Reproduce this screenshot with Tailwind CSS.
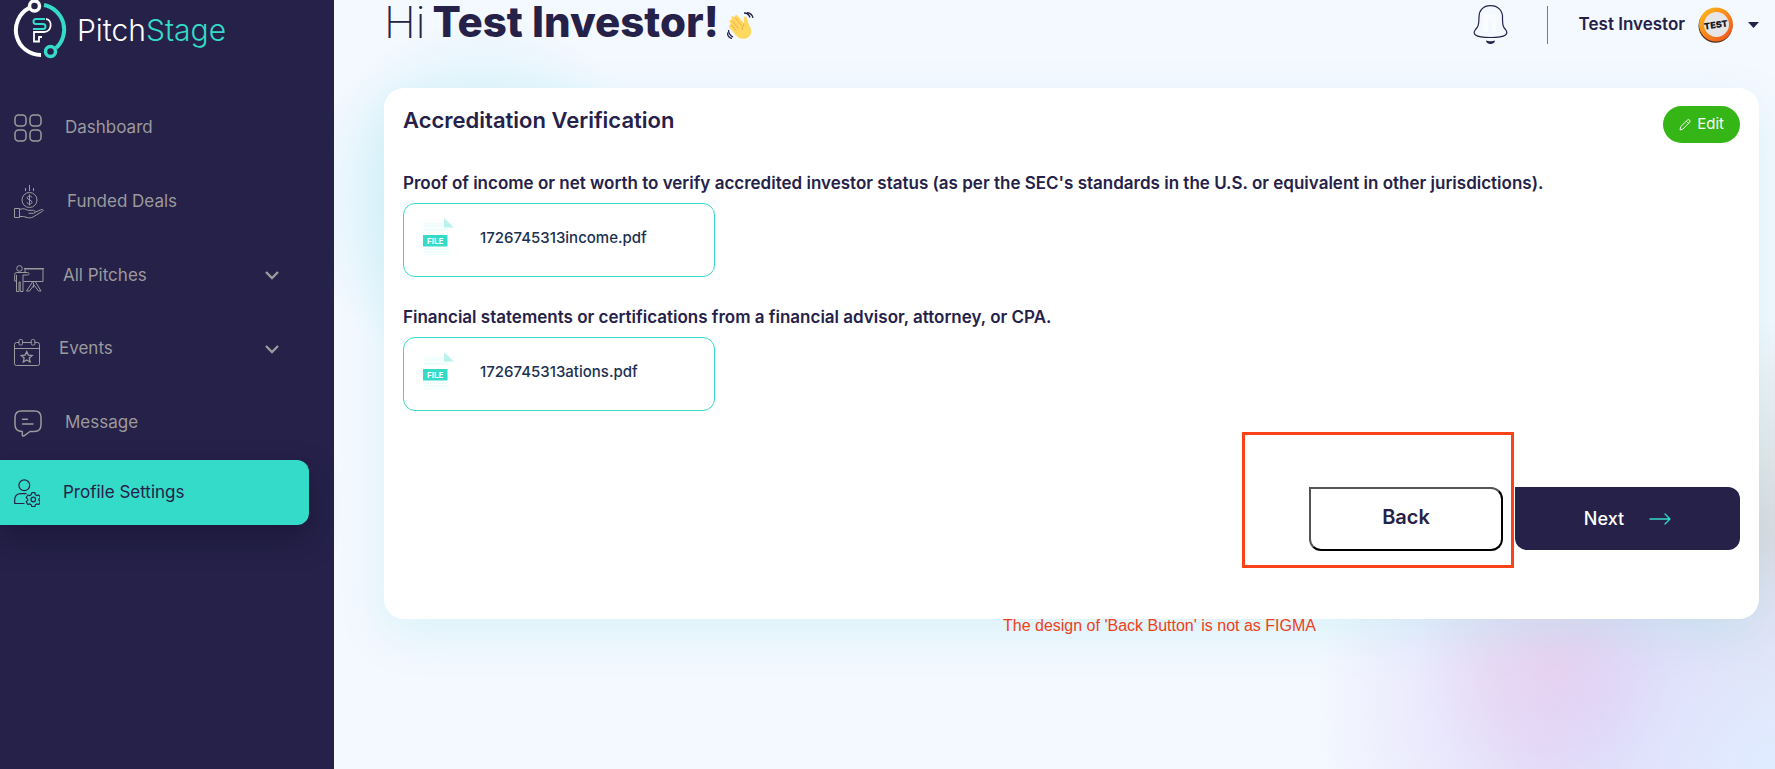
<!DOCTYPE html>
<html lang="en">
<head>
    <meta charset="UTF-8">
    <meta name="viewport" content="width=device-width, initial-scale=1.0">
    <title>PitchStage - Profile Settings</title>
    <script src="https://cdn.jsdelivr.net/npm/@tailwindcss/browser@4"></script>
</head>
<body class="flex min-h-screen overflow-hidden bg-[#f4f8ff] font-['Inter',sans-serif] text-[#252149]">
    <!-- Sidebar -->
    <aside class="w-[334px] shrink-0 bg-[#252149] text-[#9c9a9c]">
        <a href="#" class="flex h-[91px] items-start gap-[9px] pl-[13px] text-[30px] leading-[60px] font-light text-white">
            <svg class="h-[60px] w-[55px]" viewBox="13 0 55 60" fill="none" stroke-width="4">
                <path d="M29 8A25 25 0 0 0 41 55" stroke="#fff"/>
                <path d="M44 5A25 25 0 0 1 56 48" stroke="#34dbc8"/>
                <circle cx="34.500" cy="6" r="5" stroke="#fff" stroke-width="3.500"/>
                <circle cx="50.500" cy="51.500" r="5" stroke="#34dbc8" stroke-width="3.500"/>
                <path d="M45 19H36a2.500 2.500 0 0 0 0 5h7a2.500 2.500 0 0 1 0 5H33" stroke="#34dbc8" stroke-width="2"/>
                <path d="M46 19c7 1 6 13-2 13H34v9.500h5V37h3" stroke="#fff" stroke-width="1.800"/>
            </svg>
            <span>Pitch<span class="text-[#34dbc8]">Stage</span></span>
        </a>
        <nav class="text-[17px]">
            <a href="#" class="flex h-[74px] items-center gap-[23px] pl-[14px]">
                <svg class="size-7" viewBox="0 0 28 28" fill="none" stroke="currentColor" stroke-width="1.500">
                    <rect x="1" y="1" width="11" height="11" rx="3.500"/><rect x="16" y="1" width="11" height="11" rx="3.500"/>
                    <rect x="1" y="16" width="11" height="11" rx="3.500"/><rect x="16" y="16" width="11" height="11" rx="3.500"/>
                </svg>
                Dashboard
            </a>
            <a href="#" class="flex h-[74px] items-center gap-[23px] pl-[14px]">
                <svg class="h-[34px] w-[30px]" viewBox="0 0 30 34" fill="none" stroke="currentColor" stroke-width="1">
                    <path d="M15.500 0v6M11.500 3v3M19.500 3v3"/>
                    <circle cx="15.500" cy="15" r="7.500"/>
                    <path d="M18 12.500c-.5-2-4.500-2-4.800.2-.3 2.300 4.800 2 4.800 4.500 0 2.300-4.500 2.500-5 .2M15.500 9.500v11"/>
                    <path d="M.5 23.500h5v9h-5zM5.500 24.500c4-1.500 6-.5 8 .8h6c2 0 2 3 0 3h-5M20.500 27.500l7-3c2-.5 2 1 1 1.700L19 32c-2 1-4 1-6 .5l-3.500-1h-4"/>
                </svg>
                Funded Deals
            </a>
            <a href="#" class="flex h-[73px] items-center gap-[19px] pr-[55px] pl-[14px]">
                <svg class="mt-[6px] h-[28px] w-[30px]" viewBox="0 0 30 28" fill="none" stroke="currentColor" stroke-width="1">
                    <circle cx="5.500" cy="3.500" r="2.800"/>
                    <path d="M.7 16V9.500Q.7 7.500 3 7.500h10.500c2 0 2 2.500 0 2.500H9v16.500H6.200V17H5v9.500H2.500V10M.7 16h1.800M11 7.500V4h18v12.500H9.500M10 3.500h20"/>
                    <path d="M18.500 17l-6 9h3l4.500-6 4.500 6H27l-5.500-9M19.500 17.500v5"/>
                </svg>
                All Pitches
                <svg class="ml-auto h-[9px] w-[14px]" viewBox="0 0 14 9" fill="none" stroke="currentColor" stroke-width="2.400"><path d="M1 1l6 6 6-6"/></svg>
            </a>
            <a href="#" class="flex h-[74px] items-center gap-[19px] pr-[55px] pl-[14px]">
                <svg class="mt-[6px] h-[27px] w-[26px]" viewBox="0 0 26 27" fill="none" stroke="currentColor" stroke-width="1">
                    <path d="M5 3.500H2.500q-2 0-2 2v19q0 2 2 2h21q2 0 2-2v-19q0-2-2-2H21M9 3.500h8M.5 9.500h25"/>
                    <rect x="5" y=".5" width="3.500" height="5.500" rx="1.200"/><rect x="17.300" y=".5" width="3.500" height="5.500" rx="1.200"/>
                    <path stroke-width="1.300" d="M12.700 12.500l1.600 3.600 3.900.4-2.900 2.600.8 3.900-3.400-2-3.400 2 .8-3.900-2.900-2.600 3.900-.4z"/>
                </svg>
                Events
                <svg class="ml-auto h-[9px] w-[14px]" viewBox="0 0 14 9" fill="none" stroke="currentColor" stroke-width="2.400"><path d="M1 1l6 6 6-6"/></svg>
            </a>
            <a href="#" class="flex h-[74px] items-center gap-[23px] pl-[14px]">
                <svg class="h-[27px] w-[28px]" viewBox="0 0 28 27" fill="none" stroke="currentColor" stroke-width="1.500" stroke-linejoin="round" stroke-linecap="round">
                    <path d="M7.500 1h13Q27 1 27 7.500v7q0 7-6.500 7H16l-6 4.300q-1.700.7-1.700-1V21.500Q1 21.500 1 14.500v-7Q1 1 7.500 1zM8.500 9.300h5M8.500 14h10.500"/>
                </svg>
                Message
            </a>
            <a href="#" class="mr-[25px] flex h-[65px] items-center gap-[23px] rounded-r-xl bg-[#34dbc8] pl-[14px] text-[#252149] shadow-[0_14px_28px_rgba(20,15,45,0.500)]">
                <svg class="h-[28px] w-[26px]" viewBox="0 0 26 28" fill="none" stroke="currentColor" stroke-width="1.200" stroke-linejoin="round">
                    <circle cx="10.300" cy="6.300" r="5.400"/>
                    <path d="M10.500 24.500H.7V21q0-6.300 6.300-6.300h5.500"/>
                    <circle cx="19.300" cy="20.500" r="2.300"/>
                    <path d="M17.700 13.700h3.200l.5 2.100 1.400.8 2-.6 1.600 2.700-1.500 1.500v1.200l1.500 1.400-1.600 2.700-2-.6-1.400.8-.5 2h-3.200l-.5-2-1.400-.8-2 .6-1.600-2.700 1.500-1.400v-1.200l-1.500-1.500 1.600-2.700 2 .6 1.400-.8z"/>
                </svg>
                Profile Settings
            </a>
        </nav>
    </aside>

    <!-- Main -->
    <main class="min-w-0 flex-1 bg-[radial-gradient(circle_at_150px_200px,#c5eef6_0,#c5eef600_180px),radial-gradient(circle_at_100%_100%,#dfebff_0,#dfebff00_230px),radial-gradient(circle_at_calc(100%-225px)_660px,#eccbea90_0,#eccbea00_130px),radial-gradient(circle_at_calc(100%-170px)_700px,#dcd3f8_0,#dcd3f8b0_100px,#dcd3f800_290px),radial-gradient(circle_at_calc(100%-20px)_540px,#d8d8d8_0,#e2dcd800_220px)] pr-4 pl-[50px]">
        <header class="flex h-[88px] items-start justify-between">
            <h1 class="flex items-center text-[43px] leading-[44px] font-extralight">
                Hi<b class="ml-[7px] text-[42px] font-extrabold">Test Investor!</b>
                <svg class="mt-[7px] ml-2 size-[27px]" viewBox="0 0 27 27" fill="none">
                    <path d="M3 10.500c-1.500-2 .8-3.700 2.200-2.200L4.500 6.500C3.500 4.500 6 3.200 7.200 5l.7.700C7 3.500 9.500 2 11 4l6 7.500c.8-1-.7-4-.2-6 .5-1.500 2.700-1.300 3.200 1l1.500 5c1 2.200 2.700 4.700 2.700 8 0 4-3 7-7 7.300-4.500.3-7-1.500-9.500-5L2.500 15.500c-1.200-1.700.3-3.300 1.800-2.500z" fill="#ffd85e"/>
                    <path d="M5 8.500l6.500 8M8 5.500l6.500 8M4 12.500l5 6M17 11.500c.5 2-2.500 3-1.500 6.500" stroke="#eba352" stroke-width=".9"/>
                    <path d="M17 1c3 0 5 1.500 6 4.500M20 .5c3 .5 5.500 2.500 6 5.500M1.500 18c0 3 1.500 5.500 4.500 7M.5 20.500c0 3 2 5.500 4.500 6" stroke="#252149" stroke-width="1.300"/>
                </svg>
            </h1>
            <div class="flex items-center pt-[5px] text-[17px] font-semibold">
                <button type="button" aria-label="Notifications">
                    <svg class="h-[39px] w-[35px]" viewBox="0 0 35 39" fill="none">
                        <path d="M17.500.7C10 .7 6 5.500 6 12c0 8-1 10-3.500 12.500C-.5 28.500.5 32.500 17.500 32.500S35.500 28.500 32.500 24.500C30 22 29.500 20 29.500 12 29.500 5.500 25 .7 17.500.7z" stroke="#252149" stroke-width="1.200"/>
                        <path d="M10 9h13v18h-4V15h-4v12h-5z" fill="#fff" fill-opacity=".5"/>
                        <path d="M13 35.500c2 1 7 1 9 0 0 4.500-9 4.500-9 0z" fill="#252149"/>
                    </svg>
                </button>
                <span class="ml-[39px] h-[38px] w-px bg-[#252149]/60"></span>
                <button type="button" class="ml-[31px] flex items-center">
                    Test Investor
                    <svg class="ml-[13px] size-9" viewBox="0 0 36 36">
                        <defs><linearGradient id="ring" x1="0" y1="0" x2="1" y2="1"><stop offset="0" stop-color="#ffc21c"/><stop offset="1" stop-color="#f04a1e"/></linearGradient></defs>
                        <circle cx="18" cy="18" r="18" fill="#fff"/>
                        <circle cx="17.500" cy="18.700" r="17" fill="#4b2c1c"/>
                        <circle cx="18" cy="17.500" r="17" fill="url(#ring)"/>
                        <circle cx="18.500" cy="17.500" r="12.500" fill="#e6e6e8"/>
                        <text x="18" y="21" text-anchor="middle" transform="rotate(-8 18 18)" font-family="Inter, sans-serif" font-size="9" font-weight="900" fill="#1b1b1f">TEST</text>
                    </svg>
                    <svg class="ml-[14px] h-[6px] w-[11px]" viewBox="0 0 11 6" fill="currentColor"><path d="M0 0h11L5.500 6z"/></svg>
                </button>
            </div>
        </header>

        <!-- Accreditation card -->
        <section class="rounded-[20px] bg-white px-[19px] pt-[18px] pb-[68px] shadow-[0_16px_44px_rgba(120,225,225,0.200)]">
            <div class="flex h-[37px] items-start justify-between">
                <h2 class="text-[22px] leading-7 font-semibold">Accreditation Verification</h2>
                <button type="button" class="flex h-[37px] items-center gap-[6px] rounded-full bg-[#36b516] px-4 text-[15px] text-white">
                    <svg class="size-3" viewBox="0 0 12 12" fill="none" stroke="currentColor" stroke-width=".9" stroke-linejoin="round"><path d="M1 11l.7-3.300L8.500 1q1-.8 2 0 1 1 .2 2L4 10zM7.300 2.200l2.400 2.400"/></svg>
                    Edit
                </button>
            </div>

            <h3 class="mt-[28px] text-[17px] leading-6 font-semibold">Proof of income or net worth to verify accredited investor status (as per the SEC's standards in the U.S. or equivalent in other jurisdictions).</h3>
            <a href="#" class="mt-2 flex h-[74px] w-[312px] items-center rounded-xl border border-[#34dbc8] pb-1 pl-[19px] text-[15px] font-medium text-[#1c3050]">
                <svg class="h-[40px] w-[32px]" viewBox="0 0 32 40">
                    <path d="M1 5h19v2h4v2H1zM1 10h24v3H1zM1 30h25v2H1zM1 33h25v2H1zM1 36h25v1H1z" fill="#effefc"/>
                    <path d="M21 0l10 9.500H21z" fill="#b9f3eb"/>
                    <path d="M0 17h24.500v11.500H0z" fill="#34dbc8"/>
                    <text x="12.200" y="25.800" text-anchor="middle" font-family="Inter, sans-serif" font-size="8" font-weight="700" fill="#fff">FILE</text>
                </svg>
                <span class="ml-[25px]">1726745313income.pdf</span>
            </a>

            <h3 class="mt-[28px] text-[17px] leading-6 font-semibold">Financial statements or certifications from a financial advisor, attorney, or CPA.</h3>
            <a href="#" class="mt-2 flex h-[74px] w-[312px] items-center rounded-xl border border-[#34dbc8] pb-1 pl-[19px] text-[15px] font-medium text-[#1c3050]">
                <svg class="h-[40px] w-[32px]" viewBox="0 0 32 40">
                    <path d="M1 5h19v2h4v2H1zM1 10h24v3H1zM1 30h25v2H1zM1 33h25v2H1zM1 36h25v1H1z" fill="#effefc"/>
                    <path d="M21 0l10 9.500H21z" fill="#b9f3eb"/>
                    <path d="M0 17h24.500v11.500H0z" fill="#34dbc8"/>
                    <text x="12.200" y="25.800" text-anchor="middle" font-family="Inter, sans-serif" font-size="8" font-weight="700" fill="#fff">FILE</text>
                </svg>
                <span class="ml-[25px]">1726745313ations.pdf</span>
            </a>

            <div class="mt-[76px] flex justify-end gap-3">
                <div class="relative">
                    <button type="button" class="h-[64px] w-[194px] rounded-xl rounded-tl-none border-2 border-t-[#555] border-r-black border-b-black border-l-[#555] pb-1 text-[20px] font-semibold">Back</button>
                    <!-- Review note on the back button -->
                    <div class="pointer-events-none absolute -top-[55px] -right-[11px] -bottom-[17px] -left-[67px] border-3 border-[#fb4218]"></div>
                    <p class="absolute top-[127px] -left-[306px] font-['Liberation_Sans',sans-serif] text-[16px] leading-6 whitespace-nowrap text-[#f0401a]">The design of 'Back Button' is not as FIGMA</p>
                </div>
                <button type="button" class="flex h-[63px] w-[225px] items-center justify-center gap-[25px] rounded-xl rounded-tl-none bg-[#252149] text-[18px] font-medium text-white">
                    Next
                    <svg class="h-[12px] w-[22px] text-[#34dbc8]" viewBox="0 0 22 12" fill="none" stroke="currentColor" stroke-width="1.300" stroke-linecap="round" stroke-linejoin="round"><path d="M1 6h20M16 1l5 5-5 5"/></svg>
                </button>
            </div>
        </section>
    </main>
</body>
</html>
